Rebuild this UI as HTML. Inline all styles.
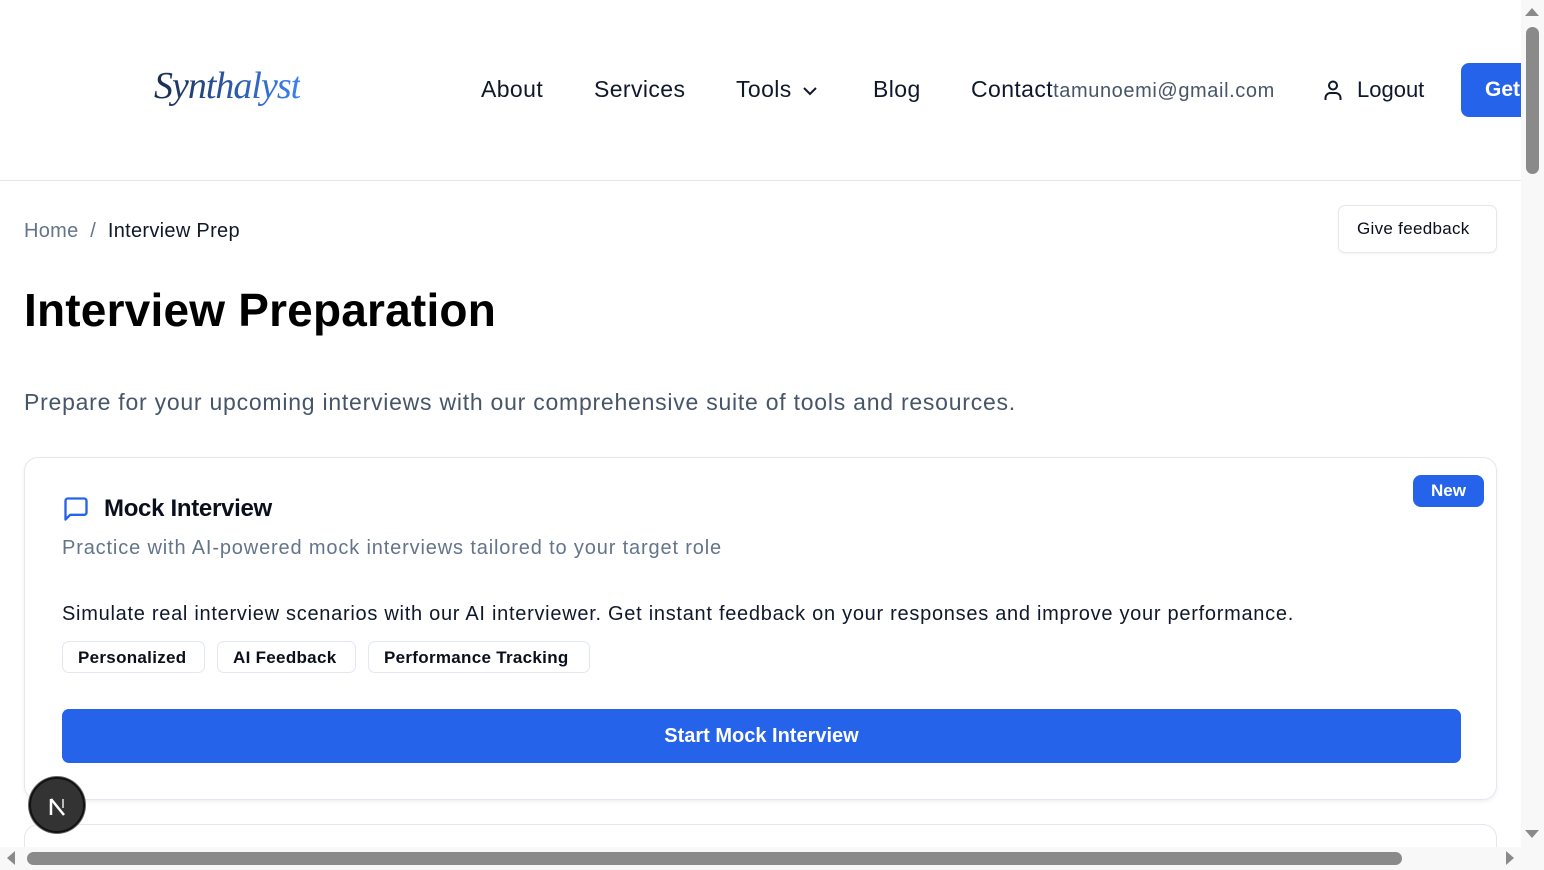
<!DOCTYPE html>
<html><head><style>
*{box-sizing:border-box;margin:0;padding:0}
html,body{width:1544px;height:870px;overflow:hidden}
body{background:#fff;font-family:"Liberation Sans",sans-serif;color:#0a0f1c;position:relative}
.hdr{position:absolute;left:0;top:0;width:1521px;height:181px;border-bottom:1px solid #e5e7eb}
.logo{position:absolute;left:154px;top:64px;font-family:"Liberation Serif",serif;font-style:italic;font-size:38px;letter-spacing:-1px;background:linear-gradient(90deg,#1b2a4a,#3b82f6);-webkit-background-clip:text;color:transparent}
.nav{position:absolute;top:76px;font-size:23px;color:#0f172a;letter-spacing:0.4px}
.btn{position:absolute;left:1461px;top:63px;width:60px;height:54px;background:#2563eb;border-radius:8px 0 0 8px;color:#fff;font-weight:bold;font-size:21px;padding:15px 0 0 24px}
.crumb{position:absolute;left:24px;top:220px;font-size:20px;color:#64748b;letter-spacing:0.3px}
.crumb b{font-weight:normal;color:#0f172a}
.fb{position:absolute;left:1338px;top:205px;width:159px;height:48px;border:1px solid #e5e7eb;border-radius:7px;font-size:17px;padding:13px 0 0 18px;box-shadow:0 1px 2px rgba(0,0,0,.05);letter-spacing:0.3px}
h1{position:absolute;left:24px;top:283px;font-size:46px;font-weight:bold;color:#000;letter-spacing:0.2px}
.sub{position:absolute;left:24px;top:389px;font-size:23px;color:#475569;letter-spacing:0.76px}
.card{position:absolute;left:24px;top:457px;width:1473px;height:343px;border:1px solid #e2e8f0;border-radius:14px;box-shadow:0 2px 4px rgba(0,0,0,.06)}
.card2{position:absolute;left:24px;top:824px;width:1473px;height:40px;border:1px solid #e2e8f0;border-bottom:none;border-radius:14px 14px 0 0}
.new{position:absolute;left:1388px;top:17px;width:71px;height:32px;background:#2563eb;border-radius:8px;color:#fff;font-weight:bold;font-size:17px;text-align:center;line-height:31px}
.ct{position:absolute;left:79px;top:37px;font-size:24px;font-weight:bold;letter-spacing:-0.3px}
.cd{position:absolute;left:37px;top:79px;font-size:20px;color:#64748b;letter-spacing:0.85px}
.cb{position:absolute;left:37px;top:145px;font-size:20px;color:#0f172a;letter-spacing:0.72px}
.tag{position:absolute;top:183px;height:32px;border:1px solid #e2e8f0;border-radius:7px;font-size:17px;font-weight:bold;padding:6px 0 0 15px;letter-spacing:0.3px}
.start{position:absolute;left:37px;top:251px;width:1399px;height:54px;background:#2563eb;border-radius:7px;color:#fff;font-weight:bold;font-size:20px;text-align:center;line-height:54px}
.vs{position:absolute;left:1521px;top:0;width:23px;height:847px;background:#f8f8f8}
.vt{position:absolute;left:1526px;top:27px;width:13px;height:147px;background:#8a8a8a;border-radius:7px}
.hs{position:absolute;left:0;top:847px;width:1544px;height:23px;background:#f8f8f8}
.ht{position:absolute;left:27px;top:852px;width:1375px;height:13px;background:#8a8a8a;border-radius:7px}
.nx{position:absolute;left:29px;top:777px;width:56px;height:56px;border-radius:50%;background:#333;border:2px solid #111;box-shadow:0 0 0 1px #666}
</style></head><body>
<div class="hdr">
<div class="logo">Synthalyst</div>
<div class="nav" style="left:481px">About</div>
<div class="nav" style="left:594px">Services</div>
<div class="nav" style="left:736px">Tools <svg width="16" height="12" viewBox="0 0 16 12" style="margin-left:4px"><path d="M2 3l6 6 6-6" fill="none" stroke="#0f172a" stroke-width="2"/></svg></div>
<div class="nav" style="left:873px">Blog</div>
<div class="nav" style="left:971px">Contact<span style="font-size:20px;color:#475569;letter-spacing:0.6px">tamunoemi@gmail.com</span></div>
<svg style="position:absolute;left:1322px;top:79px" width="22" height="22" viewBox="0 0 22 22" fill="none" stroke="#0f172a" stroke-width="2"><circle cx="11" cy="6.5" r="4"/><path d="M3.5 21v-2a5 5 0 0 1 5-5h5a5 5 0 0 1 5 5v2"/></svg>
<div class="nav" style="left:1357px;letter-spacing:0;font-size:22px;top:77px">Logout</div>
<div class="btn">Get</div>
</div>
<div class="crumb">Home &nbsp;/&nbsp; <b>Interview Prep</b></div>
<div class="fb">Give feedback</div>
<h1>Interview Preparation</h1>
<div class="sub">Prepare for your upcoming interviews with our comprehensive suite of tools and resources.</div>
<div class="card">
<svg style="position:absolute;left:37px;top:37px" width="28" height="28" viewBox="0 0 24 24" fill="none" stroke="#2563eb" stroke-width="2" stroke-linejoin="round"><path d="M3 21V5a2 2 0 0 1 2-2h14a2 2 0 0 1 2 2v10a2 2 0 0 1-2 2H7z"/></svg>
<div class="ct">Mock Interview</div>
<div class="new">New</div>
<div class="cd">Practice with AI-powered mock interviews tailored to your target role</div>
<div class="cb">Simulate real interview scenarios with our AI interviewer. Get instant feedback on your responses and improve your performance.</div>
<div class="tag" style="left:37px;width:143px">Personalized</div>
<div class="tag" style="left:192px;width:139px">AI Feedback</div>
<div class="tag" style="left:343px;width:222px">Performance Tracking</div>
<div class="start">Start Mock Interview</div>
</div>
<div class="card2"></div>
<div class="nx"><svg style="position:absolute;left:17px;top:18px" width="20" height="20" viewBox="0 0 20 20"><path d="M3 2v16" stroke="#fff" stroke-width="2.5"/><path d="M3 2l13 16" stroke="#fff" stroke-width="2.5"/><path d="M15 2v9" stroke="#bbb" stroke-width="2"/></svg></div>
<div class="vs"></div><div class="vt"></div>
<svg style="position:absolute;left:1525px;top:7px" width="14" height="9"><path d="M0 9L7 1 14 9z" fill="#8a8a8a"/></svg>
<svg style="position:absolute;left:1525px;top:830px" width="14" height="9"><path d="M0 0L7 8 14 0z" fill="#8a8a8a"/></svg>
<div class="hs"></div><div class="ht"></div>
<svg style="position:absolute;left:6px;top:851px" width="9" height="14"><path d="M9 0L1 7 9 14z" fill="#8a8a8a"/></svg>
<svg style="position:absolute;left:1506px;top:851px" width="9" height="14"><path d="M0 0L8 7 0 14z" fill="#8a8a8a"/></svg>
</body></html>
